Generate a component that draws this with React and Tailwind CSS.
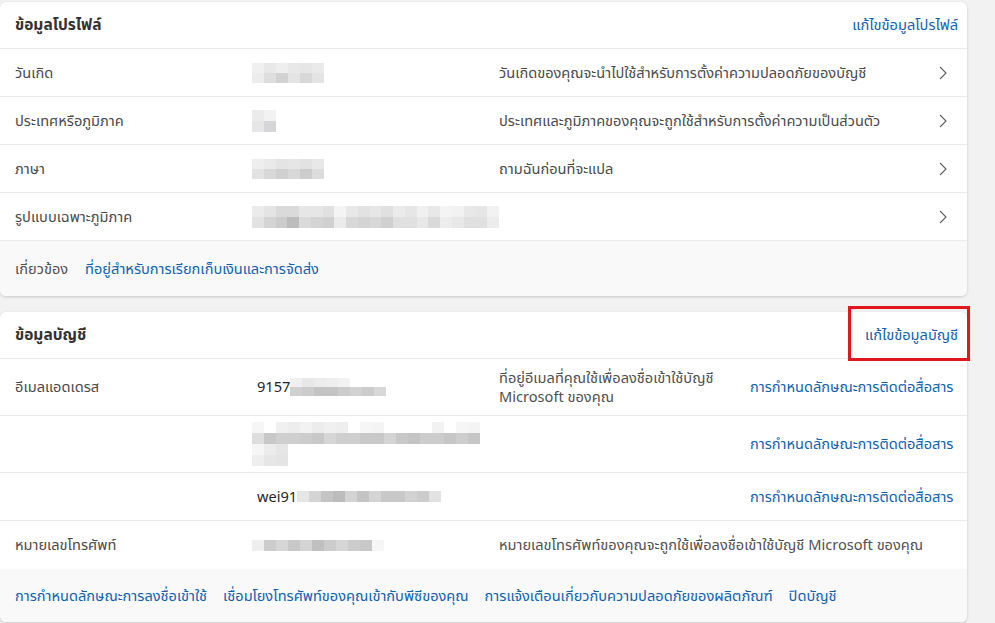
import React from "react";

const font = { fontFamily: '"Segoe UI", "Noto Sans", "Noto Sans Thai", "Open Sans", sans-serif' };

function Pixels({ rows, h = "h-[11px]" }) {
  return (
    <div className="flex flex-col">
      {rows.map((r, i) => (
        <div key={i} className="flex">
          {r.map((c, j) => (
            <div key={j} className={`w-3 ${h}`} style={{ backgroundColor: c || "transparent" }} />
          ))}
        </div>
      ))}
    </div>
  );
}

function Chevron() {
  return (
    <svg width="8" height="14" viewBox="0 0 8 14" fill="none" className="text-[#605e5c]">
      <path d="M1 1l6 6-6 6" stroke="currentColor" strokeWidth="1.1" />
    </svg>
  );
}

const link = "text-[#0f62b0]";

function ProfileRow({ label, value, desc }) {
  return (
    <div className="flex h-12 items-center border-b border-[#ebebeb] text-[14.6px] text-[#4a4a4a]">
      <div className="w-[252px] pl-[15px]">{label}</div>
      <div className="w-[247px]">{value}</div>
      <div className="flex-1">{desc}</div>
      <div className="w-[28px]">
        <Chevron />
      </div>
    </div>
  );
}

export default function App() {
  return (
    <div className="min-h-screen bg-[#f2f2f2] pt-[2px]" style={font}>
      <div className="w-[967px] overflow-hidden rounded-md bg-white shadow-[0_1px_3px_rgba(0,0,0,0.18)]">
        <div className="flex h-[47px] items-center justify-between border-b border-[#ebebeb] pl-[15px] pr-[9px]">
          <div className="text-[15.5px] font-bold text-[#323130]">ข้อมูลโปรไฟล์</div>
          <div className={`text-[14.6px] ${link}`}>แก้ไขข้อมูลโปรไฟล์</div>
        </div>
        <ProfileRow
          label="วันเกิด"
          value={<Pixels rows={[["#f0f0f0", "#e8e8e8", "#eeeeee", "#e8e8e8", "#e6e6e6", "#eaeaea"], ["#ececec", "#dedede", "#d2d2d2", "#e4e4e4", "#d8d8d8", "#e4e4e4"]]} h="h-[10px]" />}
          desc="วันเกิดของคุณจะนำไปใช้สำหรับการตั้งค่าความปลอดภัยของบัญชี"
        />
        <ProfileRow
          label="ประเทศหรือภูมิภาค"
          value={<Pixels rows={[["#ebebeb", "#f2f2f2"], ["#e6e6e6", "#d6d6d8"]]} />}
          desc="ประเทศและภูมิภาคของคุณจะถูกใช้สำหรับการตั้งค่าความเป็นส่วนตัว"
        />
        <ProfileRow
          label="ภาษา"
          value={<Pixels rows={[["#eeeeee", "#eaeaea", "#e4e4e4", "#e6e6e6", "#e2e2e2", "#e8e8e8"], ["#e2e2e2", "#d8d8d8", "#d0d0d0", "#d8d8d8", "#cccccc", "#dcdcdc"]]} h="h-[10px]" />}
          desc="ถามฉันก่อนที่จะแปล"
        />
        <ProfileRow
          label="รูปแบบเฉพาะภูมิภาค"
          value={
            <Pixels
              rows={[
                ["#ebebeb", "#e4e4e4", "#dadada", "#dadada", "#e6e6e6", "#e6e6e6", "#e0e0e0", "#f4f4f4", "#e8e8e8", "#e2e2e2", "#e6e6e6", "#e0e0e0", "#ebebeb", "#e6e6e6", "#f0f0f0", "#e8e8e8", "#f4f4f4", "#f2f2f2", "#e8e8e8", "#e6e6e6", "#f2f2f2"],
                ["#e2e2e2", "#d4d4d4", "#cccccc", "#bcbcbc", "#dadada", "#d4d4d4", "#d0d0d0", "#ebebeb", "#d8d8d8", "#d4d4d4", "#d8d8d8", "#d0d0d0", "#e0e0e0", "#e0e0e0", "#e8e8e8", "#dadada", "#ededed", "#e8e8e8", "#e0e0e0", "#e0e0e0", "#ececec"],
              ]}
            />
          }
          desc=""
        />
        <div className="flex h-[55px] items-center gap-[17px] bg-[#f9f9f9] pl-[15px] text-[14.6px]">
          <span className="text-[#505050]">เกี่ยวข้อง</span>
          <span className={link}>ที่อยู่สำหรับการเรียกเก็บเงินและการจัดส่ง</span>
        </div>
      </div>

      <div className="mt-[16px] w-[967px] rounded-md bg-white shadow-[0_1px_3px_rgba(0,0,0,0.18)]">
        <div className="relative flex h-[47px] items-center justify-between border-b border-[#ebebeb] pl-[15px] pr-[9px]">
          <div className="text-[15.5px] font-bold text-[#323130]">ข้อมูลบัญชี</div>
          <div className={`text-[14.6px] ${link}`}>แก้ไขข้อมูลบัญชี</div>
          <div className="pointer-events-none absolute right-[-3px] top-[-6px] h-[55px] w-[122px] border-[3px] border-[#e3161b]" />
        </div>

        <div className="flex h-[57px] items-center border-b border-[#ebebeb] text-[14.6px] text-[#4a4a4a]">
          <div className="w-[257px] pl-[15px]">อีเมลแอดเดรส</div>
          <div className="flex w-[242px] items-center">
            <span className="text-[#262626]">9157</span>
            <Pixels rows={[["#f0f0f0", "#e8e8e8", "#ececec", "#eeeeee", "#f2f2f2", null, null, null], ["#d0d0d0", "#cccccc", "#c4c4c4", "#c4c4c4", "#cccccc", "#d2d2d2", "#cccccc", "#d8d8d8"]]} h="h-[9px]" />
          </div>
          <div className="w-[251px] leading-[19px] text-[#505050]">ที่อยู่อีเมลที่คุณใช้เพื่อลงชื่อเข้าใช้บัญชี Microsoft ของคุณ</div>
          <div className={link}>การกำหนดลักษณะการติดต่อสื่อสาร</div>
        </div>

        <div className="flex h-[57px] items-center border-b border-[#ebebeb] text-[14.6px]">
          <div className="w-[252px]" />
          <div className="w-[498px]">
            <Pixels
              rows={[
                ["#f6f6f6", null, "#f0f0f0", "#ededed", "#f2f2f2", "#ececec", "#f0f0f0", "#eeeeee", null, "#f6f6f6", "#f4f4f4", null, null, null, null, "#f2f2f2", null, "#f6f6f6", "#f4f4f4"],
                ["#dedede", "#c8c8c8", "#cfcfcf", "#cfcfcf", "#cccccc", "#c8c8c8", "#d6d6d6", "#cfcfcf", "#cfcfcf", "#c8c8c8", "#c8c8c8", "#d4d4d4", "#c8c8c8", "#c4c4c4", "#cccccc", "#cccccc", "#c6c6c6", "#cdcdcd", "#c6c6c6"],
                ["#f6f6f6", "#ececec", "#e6e6e6"],
                ["#eeeeee", "#e6e6e6", "#e4e4e4"],
              ]}
            />
          </div>
          <div className={link}>การกำหนดลักษณะการติดต่อสื่อสาร</div>
        </div>

        <div className="flex h-12 items-center border-b border-[#ebebeb] text-[14.6px]">
          <div className="w-[257px]" />
          <div className="flex w-[493px] items-center">
            <span className="text-[#262626]">wei91</span>
            <Pixels rows={[["#e6e6e6", "#d4d4d4", "#c4c4c4", "#bcbcbc", "#d4d4d4", "#c4c4c4", "#d4d4d4", "#c8c8c8", "#c8c8c8", "#d2d2d2", "#cccccc", "#e2e2e2"]]} />
          </div>
          <div className={link}>การกำหนดลักษณะการติดต่อสื่อสาร</div>
        </div>

        <div className="flex h-12 items-center text-[14.6px] text-[#4a4a4a]">
          <div className="w-[252px] pl-[15px]">หมายเลขโทรศัพท์</div>
          <div className="w-[247px]">
            <Pixels rows={[["#eeeeee", "#cccccc", "#d6d6d6", "#c8c8c8", "#d4d4d4", "#c0c0c0", "#cccccc", "#d6d6d6", "#cccccc", "#c8c8c8", "#f6f6f6"]]} />
          </div>
          <div className="text-[#505050]">หมายเลขโทรศัพท์ของคุณจะถูกใช้เพื่อลงชื่อเข้าใช้บัญชี Microsoft ของคุณ</div>
        </div>

        <div className="flex h-[53px] items-center gap-4 rounded-b-md bg-[#f9f9f9] pl-[15px] text-[14.6px]">
          <span className={link}>การกำหนดลักษณะการลงชื่อเข้าใช้</span>
          <span className={link}>เชื่อมโยงโทรศัพท์ของคุณเข้ากับพีซีของคุณ</span>
          <span className={link}>การแจ้งเตือนเกี่ยวกับความปลอดภัยของผลิตภัณฑ์</span>
          <span className={link}>ปิดบัญชี</span>
        </div>
      </div>
    </div>
  );
}
